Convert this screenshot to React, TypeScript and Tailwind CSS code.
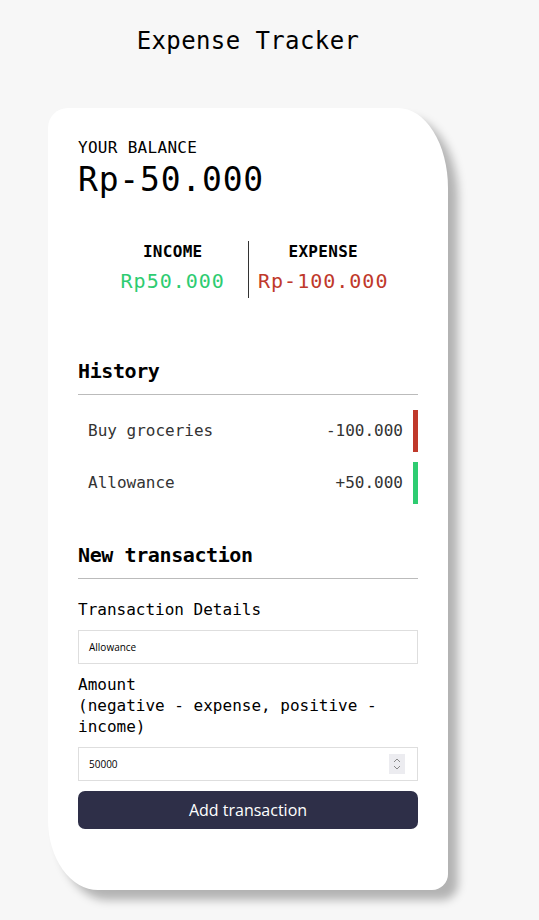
import React from "react";

const mono = "font-['DejaVu_Sans_Mono','Liberation_Mono',monospace]";

function Item({ label, amount, bar }: { label: string; amount: string; bar: string }) {
  return (
    <div className={`flex h-[42px] items-center justify-between pl-[10px] pr-[10px] border-r-[5px] ${bar}`}>
      <span className="text-[16px] tracking-[0px] text-[#333]">{label}</span>
      <span className="text-[16px] tracking-[0px] text-[#333]">{amount}</span>
    </div>
  );
}

export default function App() {
  return (
    <div className={`min-h-[920px] bg-[#f7f7f7] ${mono} text-black`}>
      <div className="ml-[48px] w-[400px] pt-[27px]">
        <h2 className="text-center text-[24px] leading-[28px] tracking-[0.4px] font-normal">Expense Tracker</h2>
        <div className="mt-[53px] bg-white rounded-[20px_50px_16px_50px/20px_80px_16px_70px] shadow-[10px_10px_10px_rgba(0,0,0,0.28)] px-[30px] pt-[30px] pb-[61px]">
          <div className="text-[16px] leading-[20px] tracking-[0.3px]">YOUR BALANCE</div>
          <div className="mt-[2px] text-[33px] leading-[40px] tracking-[0.8px]">Rp-50.000</div>

          <div className="mt-[41px] mx-[20px] flex">
            <div className="flex-1 flex flex-col items-center border-r border-[#333] pb-[3px]">
              <div className="text-[16px] leading-[20px] font-bold tracking-[0.3px] mt-[1px]">INCOME</div>
              <div className="mt-[5px] text-[20px] leading-[28px] tracking-[1px] text-[#2ecc71]">Rp50.000</div>
            </div>
            <div className="flex-1 flex flex-col items-center pb-[3px]">
              <div className="text-[16px] leading-[20px] font-bold tracking-[0.3px] mt-[1px]">EXPENSE</div>
              <div className="mt-[5px] text-[20px] leading-[28px] tracking-[1px] text-[#c0392b]">Rp-100.000</div>
            </div>
          </div>

          <h3 className="mt-[59px] text-[20px] leading-[28px] font-bold tracking-[-0.4px]">History</h3>
          <div className="mt-[9px] h-px bg-[#bbb]" />
          <div className="mt-[15px] flex flex-col gap-[10px]">
            <Item label="Buy groceries" amount="-100.000" bar="border-[#c0392b]" />
            <Item label="Allowance" amount="+50.000" bar="border-[#2ecc71]" />
          </div>

          <h3 className="mt-[37px] text-[20px] leading-[28px] font-bold tracking-[-0.4px]">New transaction</h3>
          <div className="mt-[9px] h-px bg-[#bbb]" />

          <div className="mt-[21px] text-[16px] leading-[20px] tracking-[0px]">Transaction Details</div>
          <div className="mt-[10px] h-[34px] border border-[#dedede] flex items-center px-[10px] font-['Open_Sans',sans-serif] text-[10px] text-black">
            Allowance
          </div>

          <div className="mt-[10px] text-[16px] leading-[21px] tracking-[0px]">
            Amount
            <br />
            (negative - expense, positive - income)
          </div>
          <div className="mt-[10px] h-[34px] border border-[#dedede] flex items-center justify-between pl-[10px] pr-[12px] font-['Open_Sans',sans-serif] text-[10px] text-black">
            <span>50000</span>
            <span className="w-[16px] h-[20px] bg-[#ececf0] flex flex-col items-center justify-center gap-[2px]">
              <svg width="8" height="5" viewBox="0 0 8 5"><path d="M1 4 L4 1 L7 4" fill="none" stroke="#888" strokeWidth="1" /></svg>
              <svg width="8" height="5" viewBox="0 0 8 5"><path d="M1 1 L4 4 L7 1" fill="none" stroke="#888" strokeWidth="1" /></svg>
            </span>
          </div>

          <button className="mt-[10px] w-full h-[38px] rounded-[7px] bg-[#2e2f48] text-white font-['Open_Sans',sans-serif] text-[16px]">
            Add transaction
          </button>
        </div>
      </div>
    </div>
  );
}
